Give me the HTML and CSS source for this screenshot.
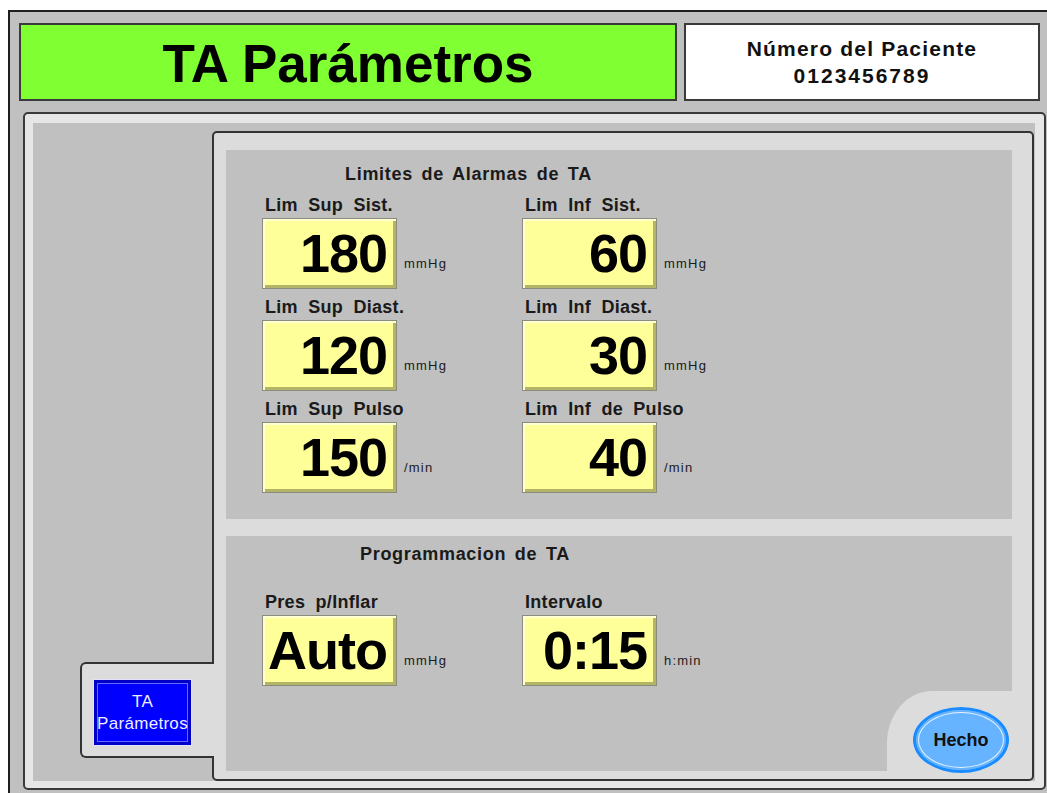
FILE: index.html
```html
<!DOCTYPE html>
<html>
<head>
  <title>TA Parámetros</title>
  <link rel="stylesheet" href="styles.css">
</head>
<body>
  <div class="device">
    <div class="header">
      <div class="title-box">TA Parámetros</div>
      <div class="patient-box">
        <div>Número del Paciente</div>
        <div class="patient-num">0123456789</div>
      </div>
    </div>

    <div class="main-panel">
      <div class="main-area">
        <div class="side">
          <div class="tab">
            <button class="tab-btn">TA<br>Parámetros</button>
          </div>
        </div>

        <div class="inner-panel">
          <div class="section alarms">
            <div class="section-title">Limites de Alarmas de TA</div>
            <div class="grid">
              <div class="field">
                <div class="label">Lim Sup Sist.</div>
                <div class="field-row"><div class="value">180</div><span class="unit">mmHg</span></div>
              </div>
              <div class="field">
                <div class="label">Lim Inf Sist.</div>
                <div class="field-row"><div class="value">60</div><span class="unit">mmHg</span></div>
              </div>
              <div class="field">
                <div class="label">Lim Sup Diast.</div>
                <div class="field-row"><div class="value">120</div><span class="unit">mmHg</span></div>
              </div>
              <div class="field">
                <div class="label">Lim Inf Diast.</div>
                <div class="field-row"><div class="value">30</div><span class="unit">mmHg</span></div>
              </div>
              <div class="field">
                <div class="label">Lim Sup Pulso</div>
                <div class="field-row"><div class="value">150</div><span class="unit">/min</span></div>
              </div>
              <div class="field">
                <div class="label">Lim Inf de Pulso</div>
                <div class="field-row"><div class="value">40</div><span class="unit">/min</span></div>
              </div>
            </div>
          </div>

          <div class="section program">
            <div class="section-title prog-title">Programmacion de TA</div>
            <div class="grid prog-grid">
              <div class="field">
                <div class="label">Pres p/Inflar</div>
                <div class="field-row"><div class="value">Auto</div><span class="unit">mmHg</span></div>
              </div>
              <div class="field">
                <div class="label">Intervalo</div>
                <div class="field-row"><div class="value">0:15</div><span class="unit">h:min</span></div>
              </div>
            </div>

            <div class="corner">
              <button class="done-btn">Hecho</button>
            </div>
          </div>
        </div>
      </div>
    </div>
  </div>
</body>
</html>
```

FILE: styles.css
```css
body {
  margin: 0;
  background-color: #ffffff;
  font-family: "Liberation Sans", Arial, sans-serif;
  overflow: hidden;
}

.device {
  margin: 10px 0 0 8px;
  width: 1050px;
  height: 800px;
  box-sizing: border-box;
  border: 2px solid #1e1e1e;
  background-color: #c0c0c0;
  padding: 11px 0 0 9px;
}

/* header */
.header {
  display: flex;
  gap: 7px;
  height: 78px;
}

.title-box {
  width: 658px;
  box-sizing: border-box;
  border: 2px solid #3a3a3a;
  background-color: #80ff33;
  font-size: 53px;
  font-weight: bold;
  color: #000;
  display: flex;
  align-items: center;
  justify-content: center;
  padding-top: 2px;
}

.patient-box {
  width: 356px;
  box-sizing: border-box;
  border: 2px solid #3a3a3a;
  background-color: #fff;
  font-size: 21px;
  font-weight: bold;
  letter-spacing: 1.2px;
  line-height: 27px;
  text-align: center;
  padding-top: 10px;
  color: #111;
}

.patient-num {
  letter-spacing: 2px;
}

/* main panel */
.main-panel {
  margin: 11px 0 0 4px;
  width: 1023px;
  height: 678px;
  box-sizing: border-box;
  border: 2px solid #3a3a3a;
  border-radius: 5px;
  background-color: #e6e6e6;
  padding: 9px 9px 7px 8px;
  display: flex;
}

.main-area {
  flex: 1;
  display: flex;
  background-color: #c0c0c0;
  padding: 8px 1px 0 0;
}

.side {
  width: 179px;
  flex-shrink: 0;
  display: flex;
  flex-direction: column;
  justify-content: flex-end;
  padding-bottom: 23px;
}

.tab {
  position: relative;
  z-index: 1;
  margin-left: 47px;
  margin-right: -2px;
  height: 96px;
  box-sizing: border-box;
  border: 2px solid #333;
  border-right: none;
  border-radius: 6px 0 0 6px;
  background-color: #dcdcdc;
  padding: 15px 0 0 11px;
}

.tab-btn {
  width: 99px;
  height: 67px;
  border: 1px solid #e0e0ff;
  background-color: #0000ff;
  box-shadow: inset 0 0 0 3px #0000c8, inset 0 0 0 4px #6a6aff;
  color: #eeeeff;
  font-family: "Liberation Sans", Arial, sans-serif;
  font-size: 17px;
  line-height: 22px;
  letter-spacing: 0.3px;
  padding: 0;
}

.inner-panel {
  flex: 1;
  box-sizing: border-box;
  border: 2px solid #333;
  border-radius: 5px;
  background-color: #dcdcdc;
  padding: 17px 20px 8px 12px;
  display: flex;
  flex-direction: column;
  gap: 17px;
}

.section {
  background-color: #c0c0c0;
  padding-left: 36px;
}

.alarms {
  height: 369px;
  box-sizing: border-box;
  padding-top: 14px;
}

.program {
  flex: 1;
  position: relative;
  padding-top: 8px;
}

.section-title {
  margin-left: 83px;
  font-size: 18px;
  font-weight: bold;
  line-height: 21px;
  letter-spacing: 0.7px;
  word-spacing: 3px;
  color: #1a1a1a;
}

.prog-title {
  margin-left: 98px;
}

.grid {
  display: grid;
  grid-template-columns: 260px 260px;
  row-gap: 8px;
  margin-top: 10px;
}

.prog-grid {
  margin-top: 27px;
}

.label {
  margin: 0 0 2px 3px;
  font-size: 18px;
  font-weight: bold;
  line-height: 21px;
  letter-spacing: 0.3px;
  word-spacing: 5px;
  color: #1a1a1a;
}

.field-row {
  display: flex;
  align-items: flex-end;
  gap: 7px;
}

.value {
  width: 135px;
  height: 71px;
  box-sizing: border-box;
  border: 1px solid #8c8c7c;
  background-color: #ffff99;
  box-shadow: inset 2px 2px 0 #ffffd4, inset -3px -3px 0 #b4b468;
  font-size: 54px;
  font-weight: bold;
  letter-spacing: -1px;
  line-height: 69px;
  text-align: right;
  padding-right: 9px;
  color: #000;
}

.unit {
  font-size: 13px;
  letter-spacing: 1.2px;
  margin-bottom: 18px;
  color: #1a1a1a;
}

/* Hecho corner */
.corner {
  position: absolute;
  right: 0;
  bottom: 0;
  width: 125px;
  height: 80px;
  background-color: #dcdcdc;
  border-top-left-radius: 45px 52px;
}

.done-btn {
  position: absolute;
  right: 3px;
  bottom: -2px;
  width: 96px;
  height: 66px;
  border: 3px solid #1a8cff;
  border-radius: 50%;
  background-color: #66b3ff;
  box-shadow: inset 0 0 0 2px #66b3ff, inset 0 0 0 3px #e6f3ff;
  font-family: "Liberation Sans", Arial, sans-serif;
  font-size: 18px;
  font-weight: bold;
  color: #111;
  padding: 0;
}
```
